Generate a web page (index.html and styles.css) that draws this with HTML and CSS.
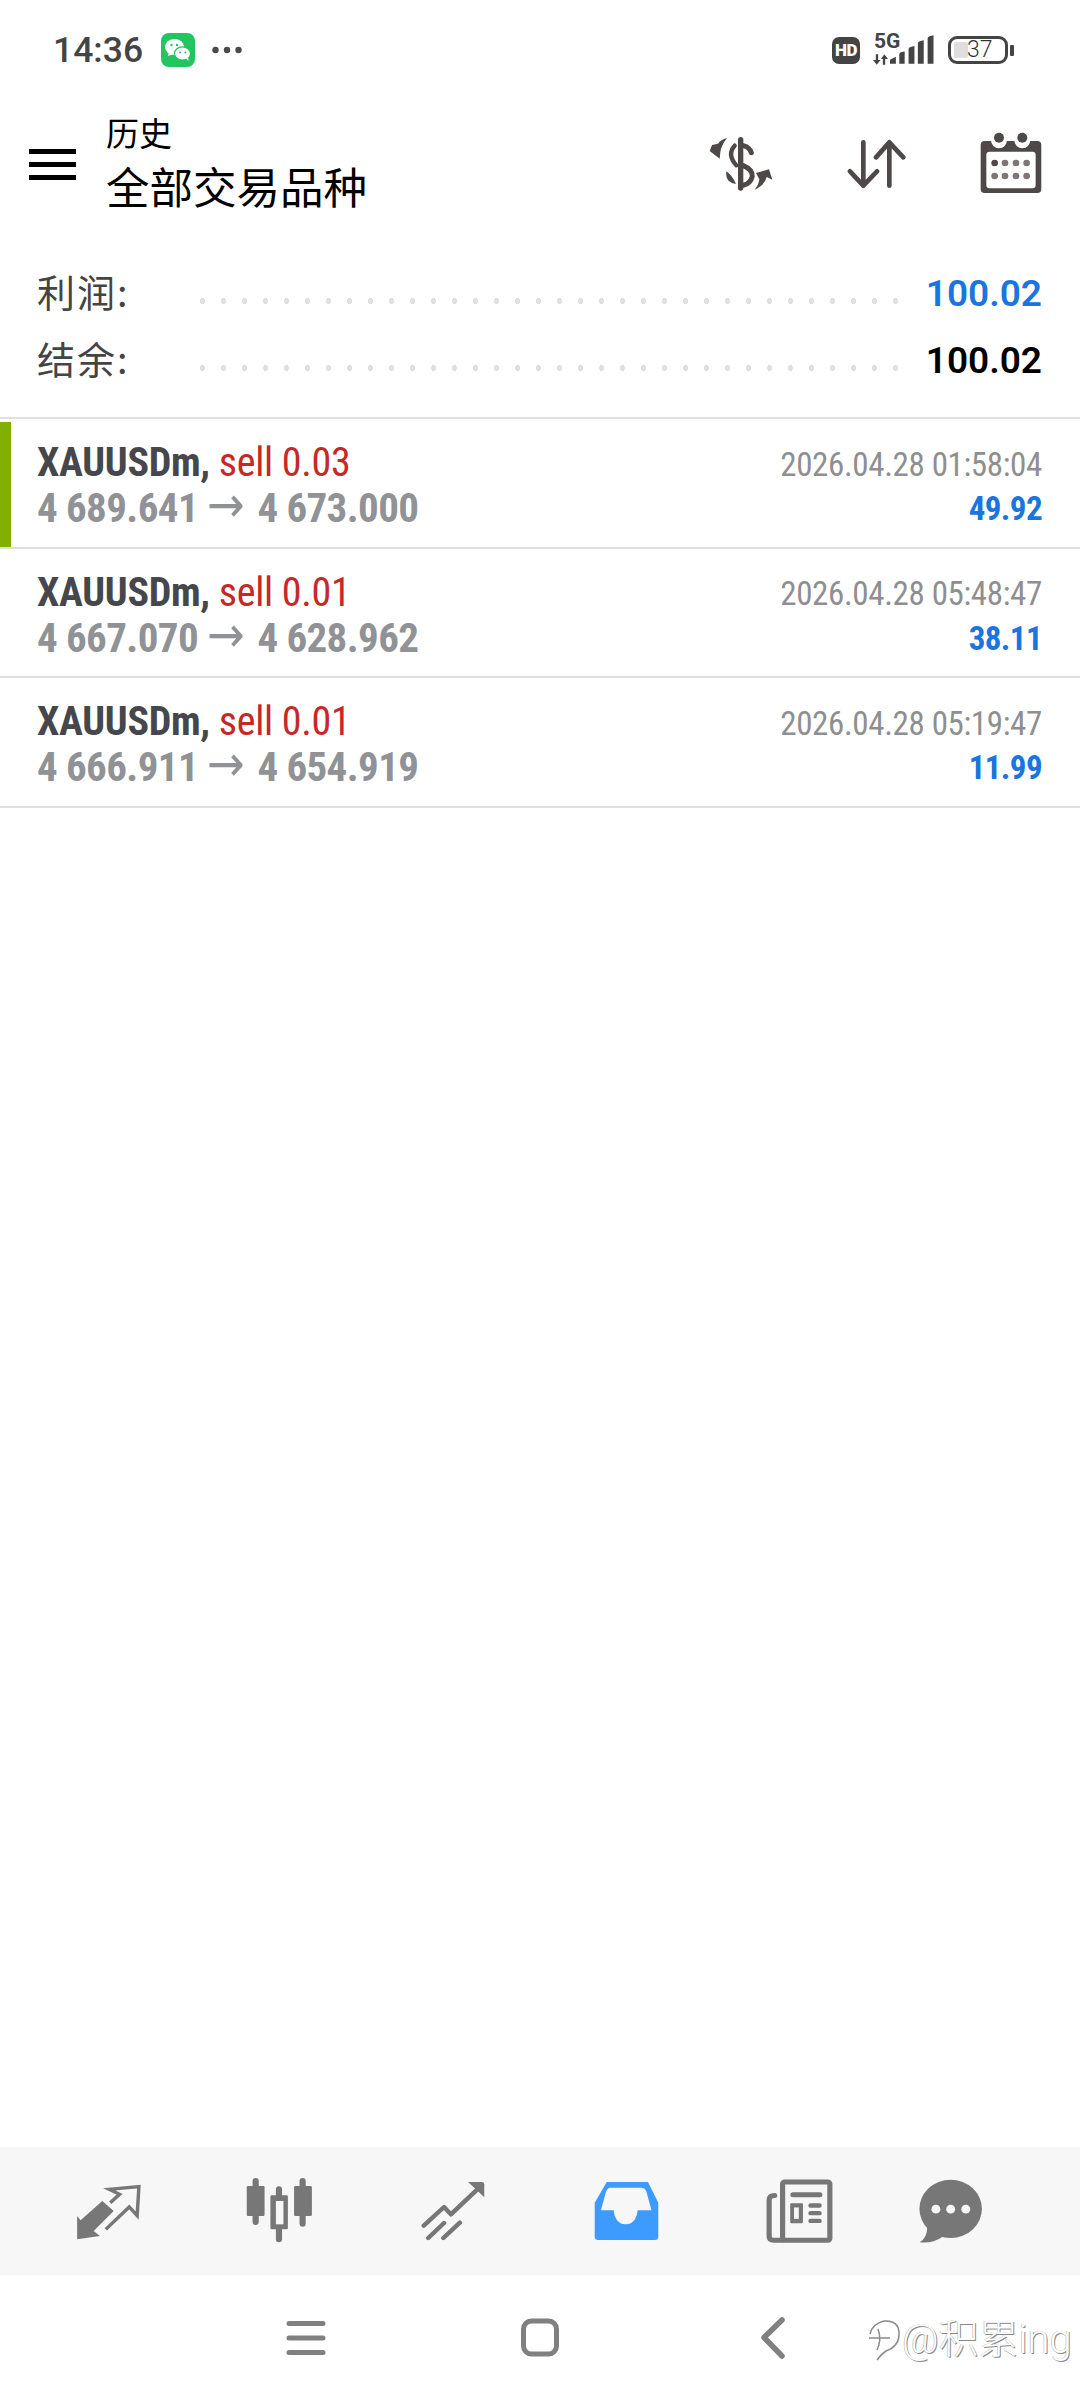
FILE: index.html
```html
<!DOCTYPE html>
<html lang="zh">
<head>
<meta charset="utf-8">
<title>历史</title>
<link rel="stylesheet" href="styles.css">
</head>
<body>
<div class="app">
  <div class="status">
    <span class="clock">14:36</span>
    <svg class="wechat" viewBox="0 0 34 34"><rect width="34" height="34" rx="8" fill="#22c55f"/><ellipse cx="13.5" cy="14" rx="9.5" ry="8" fill="#fff"/><path d="M8 19l-1 4 5-2z" fill="#fff"/><ellipse cx="21.5" cy="20.5" rx="8" ry="6.6" fill="#fff" stroke="#22c55f" stroke-width="1.2"/><path d="M25 25.5l2.5 2.5-.2-4z" fill="#fff"/><circle cx="10.5" cy="12" r="1.2" fill="#22c55f"/><circle cx="16" cy="12" r="1.2" fill="#22c55f"/><circle cx="19" cy="19.5" r="1" fill="#22c55f"/><circle cx="24.5" cy="19.5" r="1" fill="#22c55f"/></svg>
    <svg class="more" viewBox="0 0 30 8"><circle cx="3.5" cy="4" r="3.2"/><circle cx="15" cy="4" r="3.2"/><circle cx="26.5" cy="4" r="3.2"/></svg>
    <div class="status-right">
      <span class="hd">HD</span>
      <div class="net">
        <span class="fiveg">5G</span>
        <svg class="updown" viewBox="0 0 16 11"><path d="M3 0h2.500v6H8L4 11 0 6h3zM10.500 11h2.500V5h3L12 0 8.500 5h2z"/></svg>
        <svg class="bars" viewBox="0 0 45 29"><path d="M0 29v-4l6-3v7zM9.500 29V19.500q0-2 2.500-2.500l3-.5V29zM19 29V14q0-1.500 2-2l4-1v18zM28.500 29V8q0-1.500 2-2l4-1v24zM38.500 29V3q0-1.500 2-2l4-1v29z"/></svg>
      </div>
      <div class="battery"><span class="level"></span><span class="percent">37</span></div>
      <span class="nub"></span>
    </div>
  </div>

  <header class="bar">
    <button class="burger" aria-label="menu"><i></i><i></i><i></i></button>
    <div class="titles">
      <div class="title-small">历史</div>
      <div class="title-big">全部交易品种</div>
    </div>
    <div class="actions">
      <svg class="act-dollar" viewBox="80 80 195 160"><g fill="none" stroke="#4f4848" stroke-linecap="round"><path d="M178 88V233" stroke-width="16"/><path d="M186 106Q205 111 210 127" stroke-width="15"/><path d="M160 106Q136 132 165 165" stroke-width="13"/><path d="M186 166Q214 178 213 198Q208 220 186 225" stroke-width="15"/></g><path d="M135 183Q151 193 164 221Q130 215 135 183zM137 83Q118 88 110 100L92 104L85 122L115 145L117 125Q120 105 137 83zM220 238Q232 224 234 207L224 188L263 177L273 208L256 200Q250 226 220 238z" fill="#4f4848"/></svg>
      <svg class="act-sort" viewBox="495 85 180 150"><path d="M547 95V225M507 182L547 225L588 182M625 225V95M585 140L625 95L667 140" fill="none" stroke="#4f4848" stroke-width="14" stroke-linecap="round" stroke-linejoin="round"/></svg>
      <svg class="act-cal" viewBox="895 60 190 190"><rect x="900" y="90" width="182" height="156" rx="12" fill="#4f4848"/><circle cx="955" cy="88" r="24" fill="#fff"/><circle cx="1025" cy="88" r="24" fill="#fff"/><circle cx="955" cy="80" r="15" fill="#4f4848"/><circle cx="1025" cy="80" r="15" fill="#4f4848"/><rect x="917" y="122" width="148" height="110" rx="10" fill="#fff"/><circle cx="942" cy="156" r="10" fill="#4f4848"/><g fill="#7d7674"><circle cx="973" cy="156" r="10"/><circle cx="1006" cy="156" r="10"/><circle cx="1038" cy="156" r="10"/><circle cx="942" cy="195" r="10"/><circle cx="973" cy="195" r="10"/><circle cx="1006" cy="195" r="10"/><circle cx="1038" cy="195" r="10"/></g></svg>
    </div>
  </header>

  <section class="summary">
    <div class="sum-row"><span class="sum-label">利润:</span><span class="dots"></span><span class="sum-value blue">100.02</span></div>
    <div class="sum-row"><span class="sum-label">结余:</span><span class="dots"></span><span class="sum-value">100.02</span></div>
  </section>

  <section class="deals">
    <article class="deal">
      <span class="marker"></span>
      <div class="deal-left">
        <div class="line-a"><b>XAUUSDm,</b> <span class="sell">sell 0.03</span></div>
        <div class="line-b">4 689.641 <span class="arrow">→</span> 4 673.000</div>
      </div>
      <div class="deal-right">
        <div class="date">2026.04.28 01:58:04</div>
        <div class="profit">49.92</div>
      </div>
    </article>
    <article class="deal">
      <div class="deal-left">
        <div class="line-a"><b>XAUUSDm,</b> <span class="sell">sell 0.01</span></div>
        <div class="line-b">4 667.070 <span class="arrow">→</span> 4 628.962</div>
      </div>
      <div class="deal-right">
        <div class="date">2026.04.28 05:48:47</div>
        <div class="profit">38.11</div>
      </div>
    </article>
    <article class="deal">
      <div class="deal-left">
        <div class="line-a"><b>XAUUSDm,</b> <span class="sell">sell 0.01</span></div>
        <div class="line-b">4 666.911 <span class="arrow">→</span> 4 654.919</div>
      </div>
      <div class="deal-right">
        <div class="date">2026.04.28 05:19:47</div>
        <div class="profit">11.99</div>
      </div>
    </article>
  </section>

  <div class="spacer"></div>

  <nav class="tabs">
    <svg class="tab-a" viewBox="210 150 200 180" preserveAspectRatio="none"><path d="M222 255L232 268L295 210L328 240L270 300L288 315L222 325z" fill="#777"/><path d="M305 295L373 228L396 254L401 167L315 175L345 190L318 215" fill="none" stroke="#777" stroke-width="10"/></svg>
    <svg class="tab-b" viewBox="710 140 210 210" preserveAspectRatio="none"><g fill="none" stroke="#777" stroke-width="18" stroke-linecap="round"><path d="M744 155V278M812 180V330M881 155V283"/></g><rect x="718" y="170" width="52" height="90" rx="4" fill="#777"/><rect x="856" y="170" width="52" height="90" rx="4" fill="#777"/><rect x="787" y="198" width="51" height="102" rx="4" fill="#777"/><rect x="803" y="215" width="22" height="70" fill="#f7f7f7"/></svg>
    <svg class="tab-c" viewBox="1220 150 195 180" preserveAspectRatio="none"><g fill="none" stroke="#777" stroke-width="13" stroke-linecap="round" stroke-linejoin="round"><path d="M1231 284L1290 228L1310 250L1390 172M1244 321L1290 276M1288 321L1336 275"/></g><path d="M1360 153H1400Q1407 153 1407 160V199z" fill="#777"/></svg>
    <svg class="tab-d" viewBox="155 150 195 180" preserveAspectRatio="none"><path d="M195 153H315L345 215V318Q345 327 335 327H170Q160 327 160 318V215z" fill="#3d9bff"/><path d="M207 170H295Q305 170 310 180L325 238H285Q280 280 250 280Q220 280 215 238H178L192 185Q196 170 207 170z" fill="#f7f7f7"/></svg>
    <svg class="tab-e" viewBox="660 140 200 200" preserveAspectRatio="none"><g fill="none" stroke="#777" stroke-width="15" stroke-linecap="round"><rect x="711" y="152" width="137" height="174" rx="6"/><path d="M688 192Q672 192 672 206V314Q672 326 685 326H711M741 190H819"/></g><g fill="none" stroke="#777" stroke-width="13" stroke-linecap="round"><path d="M792 222H818M792 245H818M792 268H818"/></g><rect x="733" y="215" width="37" height="60" rx="3" fill="#777"/><rect x="744" y="228" width="14" height="34" fill="#f7f7f7"/></svg>
    <svg class="tab-f" viewBox="1095 140 195 200" preserveAspectRatio="none"><ellipse cx="1193" cy="232" rx="91" ry="87" fill="#777"/><path d="M1125 285Q1125 318 1103 332Q1140 336 1170 315z" fill="#777"/><circle cx="1150" cy="233" r="13" fill="#f7f7f7"/><circle cx="1193" cy="233" r="13" fill="#f7f7f7"/><circle cx="1237" cy="233" r="13" fill="#f7f7f7"/></svg>
  </nav>

  <nav class="sysnav">
    <svg class="sys" viewBox="0 0 60 44"><path d="M13 7.500H47M13 22H47M13 36.500H47" fill="none" stroke="#808080" stroke-width="5" stroke-linecap="round"/></svg>
    <svg class="sys" viewBox="0 0 60 44"><rect x="13.500" y="5" width="33" height="33" rx="8" fill="none" stroke="#808080" stroke-width="5"/></svg>
    <svg class="sys" viewBox="0 0 60 44"><path d="M38 4L20 21.500L38 40" fill="none" stroke="#808080" stroke-width="5.500" stroke-linecap="round" stroke-linejoin="round"/></svg>
  </nav>

  <div class="watermark">
    <svg class="wm-logo" viewBox="0 0 36 44"><path d="M4 16Q6 6 18 3Q32 2 33 14Q34 28 20 33Q15 36 11 42M12 11Q16 22 11 32M3 20H24" fill="none" stroke="#8a8a8a" stroke-width="1.500"/></svg>
    <span class="wm-text">@积累ing</span>
  </div>
</div>
</body>
</html>
```
FILE: styles.css
```css
* { box-sizing: border-box; }
html, body { margin: 0; padding: 0; background: #fff; }
body { font-family: Roboto, "Noto Sans CJK SC", sans-serif; }
.app { position: relative; width: 1080px; height: 2400px; display: flex; flex-direction: column; overflow: hidden; background: #fff; }

/* status bar */
.status { height: 70px; padding: 30px 0 0 53px; display: flex; align-items: center; flex: none; }
.status > * { flex: none; }
.clock { width: 108px; font-size: 35.500px; font-weight: 500; line-height: 40px; color: #444; }
.wechat { width: 34px; height: 34px; }
.more { width: 30px; height: 8px; margin-left: 17px; fill: #4a4a4a; }
.status-right { margin-left: auto; display: flex; align-items: center; padding-right: 66px; height: 40px; }
.hd { width: 28px; height: 27px; border-radius: 7px; background: #444; color: #fff; font-size: 17px; font-weight: 900; line-height: 27px; text-align: center; letter-spacing: -0.5px; }
.net { position: relative; width: 61px; height: 32px; margin-left: 13px; }
.fiveg { position: absolute; left: 1px; top: -3px; font-size: 21px; font-weight: 700; line-height: 20px; color: #444; }
.updown { position: absolute; left: 0; top: 20px; width: 15px; height: 11px; fill: #444; }
.bars { position: absolute; left: 17px; top: 1px; width: 44px; height: 29px; fill: #444; }
.battery { position: relative; width: 60px; height: 28px; margin-left: 14px; border: 3px solid #444; border-radius: 9px; padding: 3px; }
.level { display: block; width: 14px; height: 100%; background: #dedede; border-radius: 2px; }
.percent { position: absolute; left: 16px; top: 0; font-size: 23px; font-weight: 300; line-height: 22px; color: #333; }
.nub { width: 4px; height: 11px; margin-left: 2px; border-radius: 1px; background: #444; }

/* app bar */
.bar { height: 188px; flex: none; display: flex; align-items: center; padding-left: 29px; padding-right: 38px; }
.burger { width: 47px; height: 31px; padding: 0; border: 0; background: none; display: flex; flex-direction: column; justify-content: space-between; }
.burger i { display: block; height: 5px; background: #000; }
.titles { margin-left: 30px; margin-top: -3px; color: #000; font-family: "Noto Sans CJK SC", sans-serif; }
.title-small { font-size: 33px; line-height: 46px; }
.title-big { font-size: 43.500px; line-height: 62px; }
.actions { margin-left: auto; display: flex; align-items: center; gap: 73px; }
.act-dollar { width: 65px; height: 53.300px; }
.act-sort { width: 60px; height: 50px; }
.act-cal { width: 63.300px; height: 63.300px; margin-top: -2px; }

/* summary */
.summary { flex: none; height: 161px; padding-bottom: 27px; border-bottom: 2px solid #e0e0e0; }
.sum-row { height: 67px; display: flex; align-items: center; padding: 0 38px 0 37px; }
.sum-label { width: 155px; padding-bottom: 3px; font-size: 38px; line-height: 67px; color: #444; letter-spacing: 2px; font-family: "Noto Sans CJK SC", sans-serif; }
.dots { width: 714px; height: 6px; margin-top: 18px; background: radial-gradient(circle 3px at 10.500px 3px, #e0e0e0 95%, transparent 100%) repeat-x; background-size: 21px 6px; }
.sum-value { margin-left: auto; padding-top: 4px; font-size: 37px; font-weight: 600; color: #000; line-height: 67px; }
.blue { color: #1a75e0; }

/* deals */
.deal { position: relative; height: 129.600px; padding: 21px 38px 0 37px; display: flex; justify-content: space-between; border-bottom: 2px solid #dedede; }
.marker { position: absolute; left: 0; top: 3px; bottom: 0; width: 11px; background: #82b000; }
.deal-left, .deal-right { font-stretch: 75%; }
.line-a { font-size: 40px; line-height: 45px; white-space: nowrap; letter-spacing: -0.3px; }
.line-a b { color: #45474d; font-weight: 700; }
.sell { color: #c62828; }
.line-b { font-size: 41px; line-height: 45px; font-weight: 700; color: #909296; white-space: nowrap; letter-spacing: -0.6px; }
.arrow { display: inline-block; margin-right: 4px; font-family: "DejaVu Sans", sans-serif; font-weight: 400; font-size: 50px; line-height: 40px; letter-spacing: 0; }
.deal-right { text-align: right; padding-top: 2.500px; }
.date { font-size: 33px; line-height: 43.500px; color: #8f8f8f; white-space: nowrap; letter-spacing: -0.35px; }
.profit { font-size: 33px; line-height: 45px; font-weight: 700; color: #1a75e0; letter-spacing: -0.6px; }

.spacer { flex: 1; }

/* bottom tabs */
.tabs { flex: none; height: 128px; background: #f7f7f7; display: grid; grid-template-columns: repeat(4, 173px) 174.500px 126px; padding-left: 20.500px; align-items: center; justify-items: center; }
.tab-a { width: 69px; height: 60px; }
.tab-b { width: 72px; height: 70px; }
.tab-c { width: 67px; height: 60px; }
.tab-d { width: 67px; height: 60px; }
.tab-e { width: 69px; height: 67px; }
.tab-f { width: 67px; height: 67px; }

/* system nav */
.sysnav { flex: none; height: 125px; display: flex; justify-content: center; align-items: center; gap: 174px; }
.sys { width: 60px; height: 44px; }

/* watermark overlay */
.watermark { position: absolute; left: 866px; top: 2316px; display: flex; align-items: center; gap: 0; }
.wm-logo { width: 36px; height: 44px; }
.wm-text { font-size: 40px; font-weight: 300; line-height: 48px; color: #fff; text-shadow: 1px 1px 0 #888, -0.500px -0.500px 0 #aaa; font-family: Roboto, "Noto Sans CJK SC", sans-serif; }
```
